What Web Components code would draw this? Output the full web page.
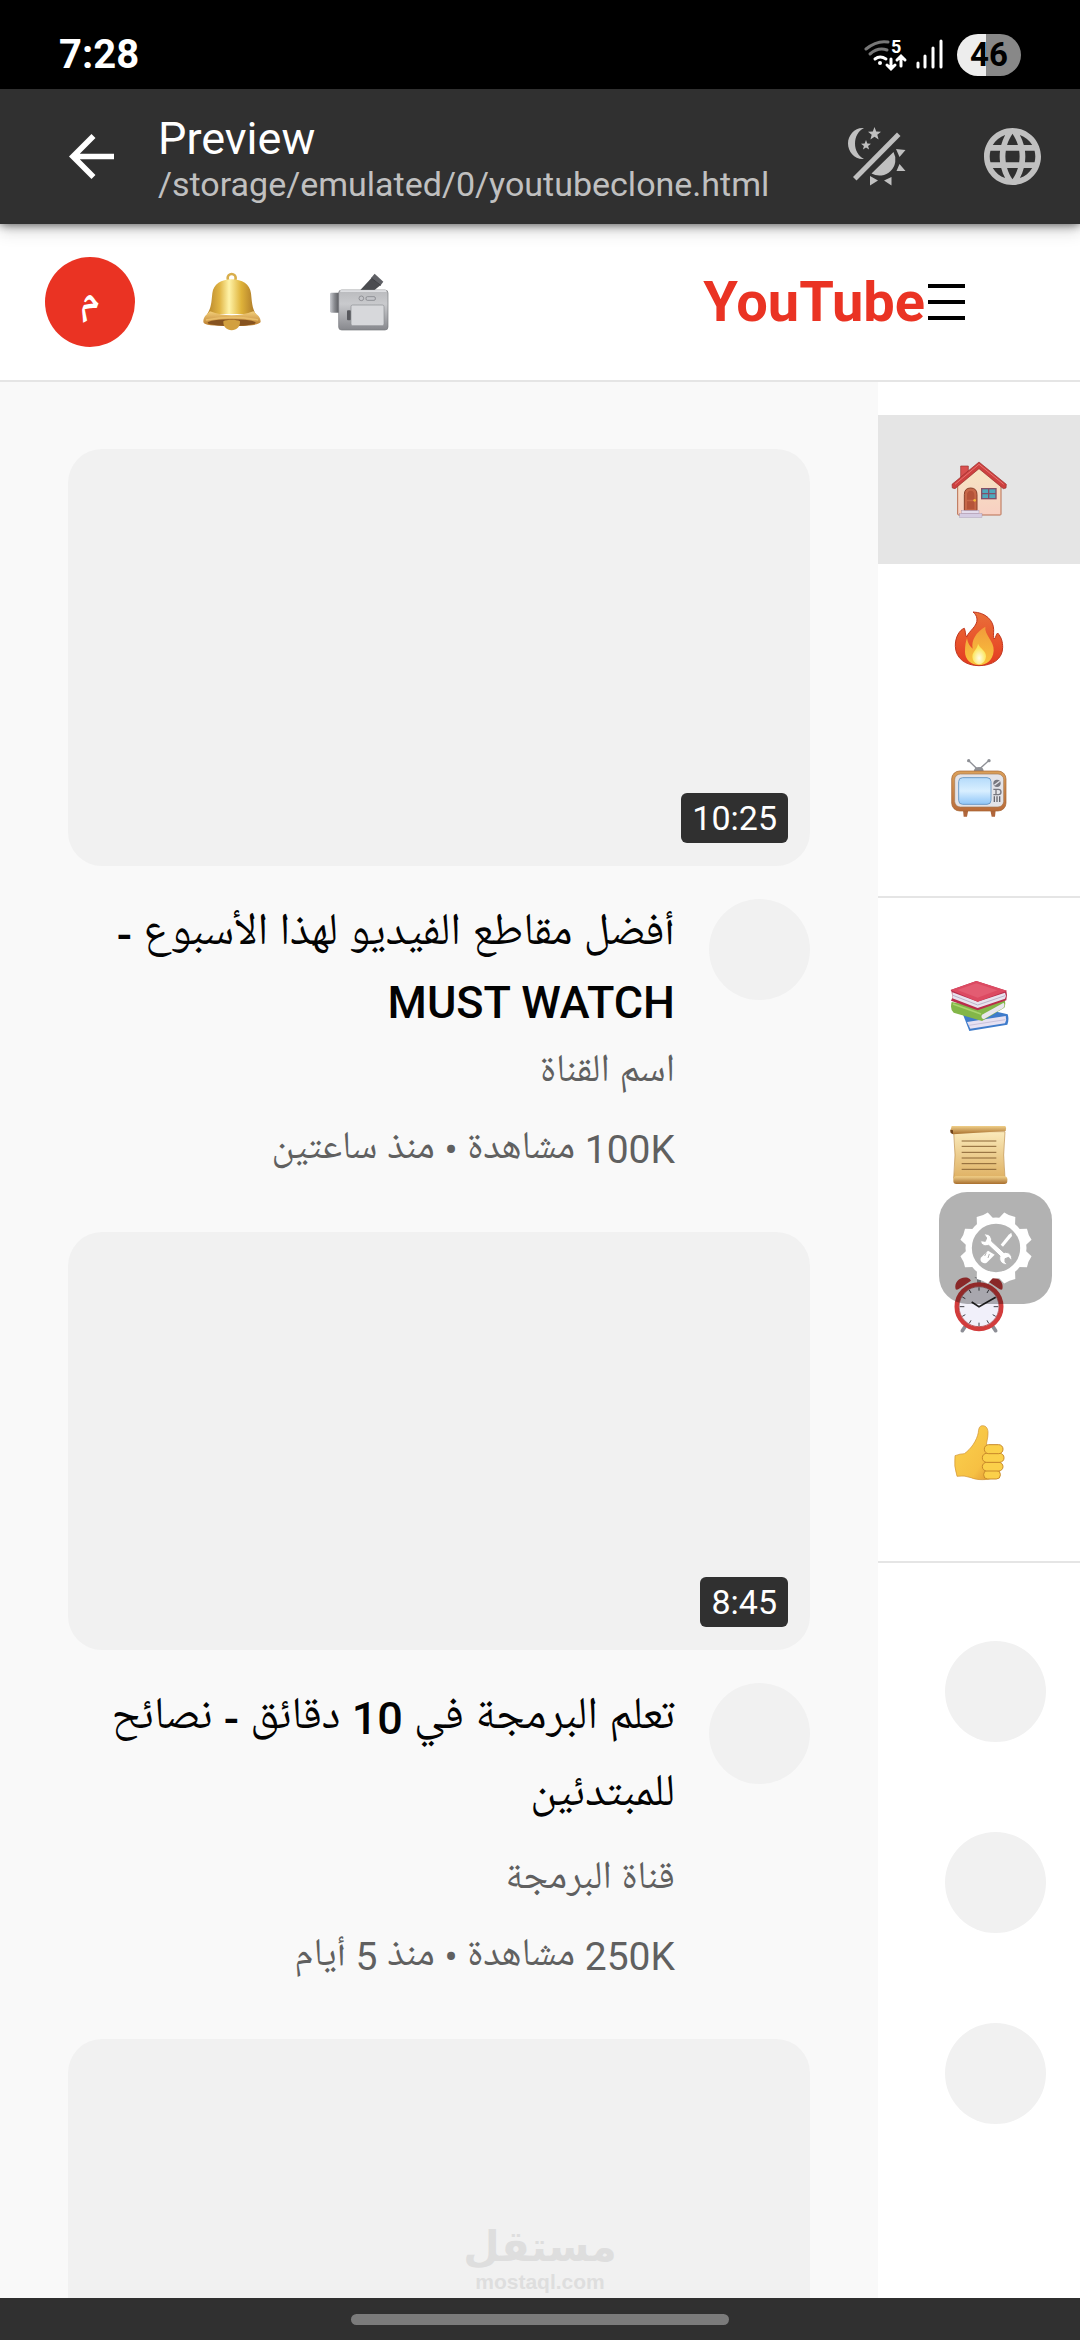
<!DOCTYPE html>
<html lang="ar" dir="rtl">
<head>
<meta charset="UTF-8">
<meta name="viewport" content="width=device-width, initial-scale=1.0">
<title>YouTube</title>
<style>
  body {
    margin: 0;
    height: 100vh;
    overflow: hidden;
    display: flex;
    flex-direction: column;
    background: #f9f9f9;
    font-family: Roboto, 'Noto Naskh Arabic UI', 'Noto Naskh Arabic', 'Noto Sans Arabic', 'DejaVu Sans', sans-serif;
  }
  .page {
    flex: 1;
    min-height: 0;
    display: flex;
    overflow: hidden;
  }
  main {
    flex: 1;
    min-width: 0;
    box-sizing: border-box;
    padding: 67px 68px 0;
    overflow: hidden;
  }
  video-card b { font-weight: 500; }
</style>
</head>
<body>
  <phone-status></phone-status>
  <preview-bar>
    <span slot="title">Preview</span>
    <span slot="path">/storage/emulated/0/youtubeclone.html</span>
  </preview-bar>
  <tube-header></tube-header>
  <div class="page">
    <side-nav></side-nav>
    <main>
      <video-card time="10:25">
        <span slot="title">أفضل مقاطع الفيديو لهذا الأسبوع <b>-</b></span>
        <span slot="latin">MUST WATCH</span>
        <span slot="channel">اسم القناة</span>
        <span slot="views">100K مشاهدة • منذ ساعتين</span>
      </video-card>
      <video-card time="8:45">
        <span slot="title">تعلم البرمجة في <b>10</b> دقائق <b>-</b> نصائح</span>
        <span slot="title">للمبتدئين</span>
        <span slot="channel">قناة البرمجة</span>
        <span slot="views">250K مشاهدة • منذ 5 أيام</span>
      </video-card>
      <video-card></video-card>
    </main>
  </div>
  <gesture-bar></gesture-bar>
  <tool-button></tool-button>
  <water-mark></water-mark>

<script>
// Emoji drawings, all on a 180x180 grid
const EMOJI = {
  bell: `
    <defs>
      <linearGradient id="g"><stop offset="0" stop-color="#b8862b"/><stop offset=".25" stop-color="#e0b443"/><stop offset=".45" stop-color="#fff3a8"/><stop offset=".7" stop-color="#dfb33a"/><stop offset="1" stop-color="#a97528"/></linearGradient>
      <linearGradient id="f" x2="0" y2="1"><stop offset="0" stop-color="#f3cf7a"/><stop offset="1" stop-color="#b8792b"/></linearGradient>
    </defs>
    <circle cx="89" cy="18" r="12" fill="none" stroke="#d8ae4c" stroke-width="8"/>
    <path d="M89 22C120 22 144 36 147 64C150 92 150 106 161 126L16 126C28 106 28 92 31 64C34 36 58 22 89 22Z" fill="url(#g)"/>
    <path d="M24 118C65 134 113 134 154 118C166 128 176 134 176 150C172 158 145 162 89 162S6 160 4 150C4 134 14 128 24 118Z" fill="url(#f)"/>
    <ellipse cx="89" cy="152" rx="72" ry="10" fill="#865320"/>
    <path d="M12 144Q89 128 168 144" fill="none" stroke="#e8bd6a" stroke-width="5"/>
    <path d="M64 148C75 142 103 142 114 148C115 164 104 175 89 175S63 164 64 148Z" fill="#d2a03f"/>`,
  camera: `
    <defs>
      <linearGradient id="g" x2="0" y2="1"><stop offset="0" stop-color="#b9babd"/><stop offset=".35" stop-color="#c9cacd"/><stop offset="1" stop-color="#87888d"/></linearGradient>
      <linearGradient id="l" x2="1" y2="0"><stop offset="0" stop-color="#c9cbd0"/><stop offset=".4" stop-color="#8b8d92"/><stop offset="1" stop-color="#47484c"/></linearGradient>
    </defs>
    <path d="M92 56L128 17L156 38L134 56Z" fill="#4b4c50"/>
    <path d="M126 18L137 5L163 29L154 41Z" fill="#5f6065"/>
    <path d="M128 19L155 40" stroke="#2f3033" stroke-width="2"/>
    <rect x="3" y="62" width="32" height="60" rx="4" fill="url(#l)"/>
    <rect x="29" y="54" width="148" height="120" rx="9" fill="url(#g)" stroke="#77787d" stroke-width="2"/>
    <path d="M34 57H172" stroke="#e9eaec" stroke-width="4"/>
    <rect x="54" y="115" width="12" height="30" rx="3" fill="#57585d"/>
    <rect x="66" y="99" width="99" height="62" rx="5" fill="#d7d8db" stroke="#8d8e93" stroke-width="2"/>
    <circle cx="97" cy="79" r="7" fill="#c4c5c9" stroke="#77787d" stroke-width="2"/>
    <rect x="111" y="74" width="28" height="11" rx="4" fill="#c4c5c9" stroke="#77787d" stroke-width="2"/>`,
  house: `
    <defs><linearGradient id="g" x2="0" y2="1"><stop offset="0" stop-color="#f6e6c2"/><stop offset="1" stop-color="#f8cfc2"/></linearGradient></defs>
    <path d="M35 18H58V48L35 66Z" fill="#d9504f" stroke="#9d3331" stroke-width="2"/>
    <path d="M26 70L90 18L156 70V163Q156 165 153 165H29Q26 165 26 162Z" fill="url(#g)" stroke="#b96e50" stroke-width="3"/>
    <path d="M90 6L172 73L171 84L163 86L90 26L18 86L10 84L9 73Z" fill="#cd403f" stroke="#97302d" stroke-width="2"/>
    <path d="M18 73L90 13L164 73" fill="none" stroke="#e97471" stroke-width="3"/>
    <path d="M46 152V104Q46 84 65 84T84 104V152Z" fill="#c76748" stroke="#8b4029" stroke-width="3"/>
    <path d="M54 119V106Q54 92 65 92T76 106V119ZM54 124H76V148H54Z" fill="#b55339"/>
    <circle cx="77" cy="121" r="4" fill="#f2b53c"/>
    <rect x="98" y="86" width="43" height="30" fill="#4fa8bd" stroke="#815068" stroke-width="4"/>
    <path d="M119 86V116M98 101H141" stroke="#815068" stroke-width="4"/>
    <rect x="38" y="151" width="52" height="9" fill="#e3dcec" stroke="#9184a6" stroke-width="1"/>
    <rect x="32" y="161" width="67" height="11" fill="#d5cce2" stroke="#9184a6" stroke-width="1"/>`,
  fire: `
    <defs>
      <linearGradient id="g" x2="0" y2="1"><stop offset="0" stop-color="#e9703a"/><stop offset=".6" stop-color="#e8502a"/><stop offset="1" stop-color="#e23a20"/></linearGradient>
      <linearGradient id="y" x2="0" y2="1"><stop offset="0" stop-color="#f19a3a"/><stop offset="1" stop-color="#f9c53d"/></linearGradient>
      <radialGradient id="c" cy=".7"><stop offset="0" stop-color="#fffde8"/><stop offset="1" stop-color="#fbe65c"/></radialGradient>
    </defs>
    <path d="M72 9C110 10 134 35 134 62C134 75 132 85 136 90C142 85 140 76 146 72C158 85 161 100 161 115C161 150 130 170 90 170C50 170 20 148 19 112C18 85 32 62 46 58C50 66 48 78 53 84C60 65 86 52 84 30C83 20 78 14 72 9Z" fill="url(#g)" stroke="#c1361f" stroke-width="3"/>
    <path d="M109 53C105 78 136 95 134 125C132 155 110 168 90 168C65 168 48 150 48 128C48 110 50 98 54 88C56 102 63 113 71 119C66 95 80 70 109 53Z" fill="url(#y)"/>
    <path d="M87 104C92 118 112 125 111 142C110 158 100 166 90 166C78 166 70 155 70 142C70 128 86 120 87 104Z" fill="url(#c)"/>`,
  tv: `
    <defs>
      <linearGradient id="g" x2="0" y2="1"><stop offset="0" stop-color="#dba05a"/><stop offset="1" stop-color="#b96b3a"/></linearGradient>
      <linearGradient id="s" x2="0" y2="1"><stop offset="0" stop-color="#b5dbfb"/><stop offset=".5" stop-color="#d9efff"/><stop offset="1" stop-color="#8fc6f8"/></linearGradient>
    </defs>
    <path d="M60 9L88 36L118 9" fill="none" stroke="#8e9096" stroke-width="4"/>
    <circle cx="59" cy="8" r="5" fill="#8e9096"/><circle cx="120" cy="8" r="5" fill="#8e9096"/>
    <path d="M74 40Q76 27 90 27T104 40Z" fill="#8e9096"/>
    <path d="M42 156H58L54 176H44ZM124 156H140L138 176H128Z" fill="#b0663b"/>
    <rect x="8" y="39" width="163" height="120" rx="24" fill="url(#g)" stroke="#a3622f" stroke-width="2"/>
    <rect x="17" y="48" width="147" height="99" rx="17" fill="#e3e3e8" stroke="#a57a54" stroke-width="2"/>
    <rect x="29" y="59" width="97" height="80" rx="12" fill="url(#s)" stroke="#6e9cc8" stroke-width="3"/>
    <circle cx="144" cy="76" r="11" fill="#77777f"/><path d="M136 82L152 70" stroke="#e3e3e8" stroke-width="4"/>
    <path d="M133 94H148Q156 94 156 102T148 110H133M141 94V110" fill="none" stroke="#77777f" stroke-width="4"/>
    <path d="M136 115V132M144 115V132M152 115V132" stroke="#66666e" stroke-width="4"/>`,
  books: `
    <path d="M41 113L110 100L176 115Q181 130 175 146L61 165Z" fill="#3f7ccb"/>
    <path d="M54 138L170 120Q174 132 168 142L64 158Z" fill="#e6e1f2"/>
    <path d="M60 148L169 131" stroke="#b9b2cf" stroke-width="2"/>
    <path d="M8 78L86 92L167 72Q171 84 166 95L99 135L14 110Q2 100 8 78Z" fill="#83b648"/>
    <path d="M99 116L164 80Q169 88 163 96L104 130Q94 126 99 116Z" fill="#e9e6ee"/>
    <path d="M12 84L96 114" stroke="#a9d56d" stroke-width="5"/>
    <path d="M5 42L82 15L172 44Q176 56 172 73L86 103L6 74L10 65L8 48Z" fill="#b92d4c"/>
    <path d="M10 49L86 77L168 50Q173 58 168 68L86 96L10 67Z" fill="#e8e2ee"/>
    <path d="M12 58L86 87L168 59" fill="none" stroke="#bcb4ca" stroke-width="3"/>
    <path d="M5 42L82 15L174 44L86 77Z" fill="#dc4a62"/>
    <path d="M25 42L82 22L145 43L86 65Z" fill="#e35c72"/>`,
  scroll: `
    <defs>
      <linearGradient id="g" x2="0" y2="1"><stop offset="0" stop-color="#faeabb"/><stop offset="1" stop-color="#dfb163"/></linearGradient>
      <linearGradient id="r" x2="0" y2="1"><stop offset="0" stop-color="#f0cf89"/><stop offset="1" stop-color="#a86f2e"/></linearGradient>
    </defs>
    <path d="M14 20H168Q160 90 168 160H14Q22 90 14 20Z" fill="url(#g)" stroke="#bd8b43" stroke-width="2"/>
    <path d="M8 3H169Q174 9 170 18L12 28Q5 26 4 18Z" fill="url(#r)"/>
    <path d="M4 14L12 16L12 27L5 24Z" fill="#70441b"/>
    <rect x="13" y="154" width="162" height="23" rx="9" fill="url(#r)"/>
    <path d="M38 48H142M38 64H142M38 82H142M38 99H142M38 116H142M38 133H142" stroke="#8a6435" stroke-width="3"/>`,
  clock: `
    <path d="M48 158L40 170M132 158L140 170" stroke="#8c8d95" stroke-width="11" stroke-linecap="round"/>
    <path d="M76 10H104L96 16V28H84V16Z" fill="#94969c"/>
    <path d="M20 46C14 24 34 6 56 11Q64 14 66 20L28 46Q23 48 20 46ZM160 46C166 24 146 6 124 11Q116 14 114 20L152 46Q157 48 160 46Z" fill="#c43a3a"/>
    <circle cx="90" cy="98" r="67" fill="#f1f0fa" stroke="#d23c3c" stroke-width="13"/>
    <circle cx="90" cy="98" r="60" fill="none" stroke="#a52c2e" stroke-width="2"/>
    <path d="M90 40V50M90 146V156M32 98H46M134 98H148M61 48L66 57M119 48L114 57M61 148L66 139M119 148L114 139M40 69L49 74M40 127L49 122M140 127L131 122" stroke="#3f3f46" stroke-width="3"/>
    <path d="M68 84L90 98L140 70" fill="none" stroke="#222" stroke-width="5"/>`,
  thumb: `
    <defs><linearGradient id="g" y2="1"><stop offset="0" stop-color="#fbd24e"/><stop offset=".7" stop-color="#f6c043"/><stop offset="1" stop-color="#de9432"/></linearGradient></defs>
    <path d="M18 98Q34 92 46 92C66 78 84 52 88 28C89 12 94 8 101 8C112 8 118 18 117 32C117 46 112 58 112 68H132V164C116 172 84 172 66 164Q46 156 24 160Q14 130 18 98Z" fill="url(#g)" stroke="#cf9132" stroke-width="2"/>
    <g fill="#fbd04a" stroke="#c98a2b" stroke-width="3">
      <rect x="104" y="142" width="50" height="26" rx="12"/>
      <rect x="100" y="118" width="62" height="26" rx="13"/>
      <rect x="100" y="91" width="65" height="27" rx="13"/>
      <rect x="106" y="65" width="56" height="27" rx="13"/>
    </g>`
};

class EmojiIcon extends HTMLElement {
  connectedCallback() {
    this.attachShadow({ mode: 'open' });
    this.shadowRoot.innerHTML = `
      <style>
        :host { display: block; width: 60px; height: 60px; }
        svg { display: block; width: 100%; height: 100%; }
      </style>
      <svg viewBox="0 0 180 180" aria-hidden="true">${EMOJI[this.getAttribute('name')]}</svg>
    `;
  }
}

class PhoneStatus extends HTMLElement {
  connectedCallback() {
    this.attachShadow({ mode: 'open' });
    this.shadowRoot.innerHTML = `
      <style>
        :host {
          display: flex;
          direction: ltr;
          justify-content: space-between;
          align-items: center;
          height: 89px;
          box-sizing: border-box;
          padding: 21px 59px 0;
          background: #000;
          color: #fff;
        }
        .clock { font-size: 40px; font-weight: 700; line-height: 48px; }
        .right { display: flex; align-items: center; gap: 14px; }
        svg { display: block; }
        .battery {
          width: 64px;
          height: 42px;
          line-height: 42px;
          border-radius: 21px;
          text-align: center;
          font-size: 33px;
          font-weight: 700;
          color: #000;
          background: linear-gradient(90deg, #ededed 46%, #888 46%);
        }
      </style>
      <span class="clock">7:28</span>
      <div class="right">
        <svg width="79" height="44" viewBox="864 34 79 44" fill="none" stroke="#fff" stroke-linecap="round">
          <path d="M866 50Q877 41 888 43" stroke="#777" stroke-width="3"/>
          <path d="M870 55Q878 48 887 51" stroke="#777" stroke-width="3"/>
          <path d="M875 60Q880 56 886 60" stroke-width="3"/>
          <circle cx="880" cy="64" r="2" fill="#fff" stroke="none"/>
          <path d="M891 60V69M887 66L891 70L895 66M901 67V58M897 61L901 57L905 61" stroke-width="3"/>
          <text x="891" y="54" font-size="18" font-weight="700" fill="#fff" stroke="none">5</text>
          <path d="M918 64V68M925 57V68M933 49V68M941 42V68" stroke-width="3"/>
        </svg>
        <span class="battery">46</span>
      </div>
    `;
  }
}

class PreviewBar extends HTMLElement {
  connectedCallback() {
    this.attachShadow({ mode: 'open' });
    this.shadowRoot.innerHTML = `
      <style>
        :host {
          display: flex;
          direction: ltr;
          align-items: center;
          position: relative;
          z-index: 2;
          height: 135px;
          box-sizing: border-box;
          padding: 0 39px 0 69px;
          background: #303030;
          box-shadow: 0 0 10px rgba(0, 0, 0, 0.7), 0 8px 16px rgba(0, 0, 0, 0.12);
          color: #c0c0c0;
        }
        button { border: 0; padding: 0; background: none; color: inherit; }
        svg { display: block; fill: currentColor; }
        .back { color: #fff; }
        .text { flex: 1; padding: 5px 0 0 44px; }
        .title { color: #fff; font-size: 45px; line-height: 50px; }
        .path { font-size: 34px; line-height: 40px; }
        .actions { display: flex; gap: 78px; }
      </style>
      <button class="back" aria-label="Back">
        <svg width="45" height="45" viewBox="4 4 16 16"><path d="M20 11H7.83l5.59-5.59L12 4l-8 8 8 8 1.41-1.41L7.83 13H20v-2z"/></svg>
      </button>
      <div class="text">
        <div class="title"><slot name="title"></slot></div>
        <div class="path"><slot name="path"></slot></div>
      </div>
      <div class="actions">
        <button aria-label="Theme">
          <svg width="59" height="59" viewBox="0 0 59 59">
            <path d="M17 1C8 0 1 8 1 16.500S8 33 17 32C11 29 8 23 8 16.500S11 4 17 1Z"/>
            <path d="M27.500 0L29.200 4.600L34 4.800L30.300 7.800L31.600 12.500L27.500 9.800L23.400 12.500L24.700 7.800L21 4.800L25.800 4.600Z"/>
            <path d="M19 13L20.300 16.500L24 16.700L21.100 19L22.100 22.600L19 20.500L15.900 22.600L16.900 19L14 16.700L17.700 16.500Z"/>
            <path d="M50 5.500L53.500 9L9.500 53.500L6 50Z"/>
            <path d="M46.500 25A16 16 0 0 1 24.500 46.500Z"/>
            <path d="M49 22L58.500 23L52.500 30ZM52.500 37L58.500 44L49.500 44ZM44.500 50V58.500L37 53.500ZM23 49L31 53.500L23 58.500Z"/>
          </svg>
        </button>
        <button aria-label="Language">
          <svg width="57" height="57" viewBox="2 2 20 20"><path d="M11.99 2C6.47 2 2 6.48 2 12s4.47 10 9.99 10C17.52 22 22 17.52 22 12S17.520 2 11.990 2zm6.930 6h-2.950c-.32-1.250-.78-2.450-1.380-3.560 1.840.63 3.370 1.910 4.330 3.560zM12 4.040c.83 1.200 1.480 2.530 1.910 3.960h-3.820c.43-1.430 1.080-2.760 1.910-3.960zM4.260 14C4.100 13.360 4 12.690 4 12s.1-1.360.26-2h3.380c-.08.66-.14 1.320-.14 2s.06 1.340.14 2H4.260zm.82 2h2.950c.32 1.250.78 2.450 1.380 3.560-1.840-.63-3.370-1.900-4.330-3.560zm2.950-8H5.080c.96-1.660 2.490-2.930 4.330-3.560C8.810 5.550 8.350 6.750 8.030 8zM12 19.960c-.83-1.200-1.480-2.530-1.910-3.960h3.820c-.43 1.430-1.080 2.760-1.910 3.960zM14.340 14H9.660c-.09-.66-.16-1.320-.16-2s.07-1.350.16-2h4.680c.09.65.16 1.320.16 2s-.07 1.340-.16 2zm.25 5.560c.6-1.110 1.060-2.310 1.380-3.560h2.950c-.96 1.650-2.490 2.930-4.330 3.560zM16.360 14c.08-.66.14-1.320.14-2s-.06-1.340-.14-2h3.380c.16.64.26 1.310.26 2s-.1 1.360-.26 2h-3.380z"/></svg>
        </button>
      </div>
    `;
  }
}

class TubeHeader extends HTMLElement {
  connectedCallback() {
    this.attachShadow({ mode: 'open' });
    this.shadowRoot.innerHTML = `
      <style>
        :host {
          display: flex;
          justify-content: space-between;
          align-items: center;
          height: 158px;
          box-sizing: border-box;
          padding: 0 115px 0 45px;
          background: #fff;
          border-bottom: 2px solid #e5e5e5;
        }
        .start { display: flex; align-items: center; gap: 3px; }
        .end { display: flex; align-items: center; gap: 67px; }
        button { border: 0; padding: 0; background: none; color: #000; }
        svg { display: block; }
        .logo {
          color: #ea3323;
          font-size: 56px;
          line-height: 64px;
          font-weight: 700;
          text-decoration: none;
        }
        .avatar {
          width: 90px;
          height: 90px;
          border-radius: 50%;
          background: #ea3323;
          color: #fff;
          font-size: 39px;
          line-height: 90px;
          text-align: center;
          font-weight: 700;
        }
      </style>
      <div class="start">
        <button aria-label="القائمة">
          <svg width="37" height="38" viewBox="0 0 37 38" fill="none" stroke="#000" stroke-width="4"><path d="M0 3H37M0 19H37M0 35H37"/></svg>
        </button>
        <a class="logo" href="#">YouTube</a>
      </div>
      <div class="end">
        <button aria-label="إنشاء"><emoji-icon name="camera"></emoji-icon></button>
        <button aria-label="الإشعارات"><emoji-icon name="bell"></emoji-icon></button>
        <div class="avatar">م</div>
      </div>
    `;
  }
}

class SideNav extends HTMLElement {
  connectedCallback() {
    const item = ([name, label], active) => `
      <a href="#" class="${active ? 'active' : ''}" aria-label="${label}"><emoji-icon name="${name}"></emoji-icon></a>`;
    const top = [['house', 'الرئيسية'], ['fire', 'الشائع'], ['tv', 'الاشتراكات']];
    const mine = [['books', 'المكتبة'], ['scroll', 'السجل'], ['clock', 'المشاهدة لاحقًا'], ['thumb', 'أعجبني']];
    this.attachShadow({ mode: 'open' });
    this.shadowRoot.innerHTML = `
      <style>
        :host {
          display: block;
          width: 202px;
          box-sizing: border-box;
          padding-top: 33px;
          background: #fff;
        }
        section {
          padding-bottom: 34px;
          margin-bottom: 33px;
          border-bottom: 2px solid #e5e5e5;
        }
        section:last-of-type { border: 0; }
        a {
          display: flex;
          justify-content: center;
          align-items: center;
          height: 149px;
        }
        a.active { background: #e5e5e5; }
        .channel { justify-content: flex-start; height: 191px; padding: 0 34px; }
        .channel i { width: 101px; height: 101px; border-radius: 50%; background: #f1f1f1; }
      </style>
      <section>${top.map((t, i) => item(t, i === 0)).join('')}</section>
      <section>${mine.map(t => item(t)).join('')}</section>
      <section>${'<a href="#" class="channel" aria-label="قناة"><i></i></a>'.repeat(3)}</section>
    `;
  }
}

class VideoCard extends HTMLElement {
  connectedCallback() {
    const time = this.getAttribute('time');
    this.attachShadow({ mode: 'open' });
    this.shadowRoot.innerHTML = `
      <style>
        :host { display: block; margin-bottom: 45px; }
        .thumb {
          position: relative;
          aspect-ratio: 16 / 9;
          border-radius: 34px;
          background: #f1f1f1;
        }
        .time {
          position: absolute;
          right: 22px;
          bottom: 23px;
          padding: 0 11px;
          border-radius: 6px;
          background: #303030;
          color: #fff;
          font-size: 34px;
          line-height: 50px;
        }
        .info { display: flex; gap: 34px; padding-top: 33px; }
        .avatar { flex: none; width: 101px; height: 101px; border-radius: 50%; background: #f1f1f1; }
        h3 { margin: 0; font-size: 45px; font-weight: 400; color: #030303; }
        ::slotted(*) { display: block; white-space: nowrap; }
        ::slotted([slot="title"]) { line-height: 71px; padding-bottom: 6px; }
        ::slotted([slot="latin"]) { line-height: 54px; font-weight: 500; }
        .meta { font-size: 39px; line-height: 58px; color: #606060; }
        ::slotted([slot="channel"]) { padding-top: 14px; padding-bottom: 6px; }
        ::slotted([slot="views"]) { padding-top: 13px; padding-bottom: 8px; }
      </style>
      <div class="thumb">${time ? `<span class="time">${time}</span>` : ''}</div>
      <div class="info">
        <div class="avatar"></div>
        <div class="text">
          <h3><slot name="title"></slot><slot name="latin"></slot></h3>
          <div class="meta"><slot name="channel"></slot><slot name="views"></slot></div>
        </div>
      </div>
    `;
  }
}

class ToolButton extends HTMLElement {
  connectedCallback() {
    const teeth = [0, 1, 2, 3, 4, 5, 6, 7]
      .map(i => `<path d="M-27 -84L-18 -108Q0 -104 18 -108L27 -84Z" transform="rotate(${22.5 + i * 45})"/>`).join('');
    this.attachShadow({ mode: 'open' });
    this.shadowRoot.innerHTML = `
      <style>
        :host { position: absolute; z-index: 3; top: 1192px; right: 28px; }
        button {
          display: flex;
          justify-content: center;
          align-items: center;
          width: 113px;
          height: 112px;
          border: 0;
          padding: 0;
          border-radius: 28px;
          background: rgba(0, 0, 0, 0.3);
        }
      </style>
      <button aria-label="Tools">
        <svg width="72" height="72" viewBox="-108 -108 216 216" fill="#fff">
          <circle r="82" fill="none" stroke="#fff" stroke-width="19"/>
          ${teeth}
          <path d="M46 -46L38 -40L14 -10L21 -4L48 -36Z"/>
          <path d="M-24 8L-44 28C-52 38 -40 50 -28 44L-4 20Z"/>
          <path d="M-29 14L-34 24M-20 18L-24 30" stroke="#b3b3b3" stroke-width="3"/>
          <path d="M-46 -22L-32 -20L-28 -30L-36 -42C-22 -44 -12 -34 -13 -20L24 14C36 10 50 20 47 38L38 28L27 32L27 42L34 50C16 50 8 38 12 24L-22 -8C-34 -4 -46 -10 -46 -22Z" stroke="#b3b3b3" stroke-width="3"/>
        </svg>
      </button>
    `;
  }
}

class WaterMark extends HTMLElement {
  connectedCallback() {
    this.attachShadow({ mode: 'open' });
    this.shadowRoot.innerHTML = `
      <style>
        :host {
          position: absolute;
          left: 0;
          right: 0;
          bottom: 46px;
          text-align: center;
          color: #dedede;
          font-weight: 700;
          pointer-events: none;
        }
        div { font: 700 42px/46px 'DejaVu Sans', sans-serif; }
        small { display: block; font: 700 21px/24px 'Liberation Sans', sans-serif; }
      </style>
      <div>مستقل</div>
      <small>mostaql.com</small>
    `;
  }
}

class GestureBar extends HTMLElement {
  connectedCallback() {
    this.attachShadow({ mode: 'open' });
    this.shadowRoot.innerHTML = `
      <style>
        :host {
          display: flex;
          justify-content: center;
          align-items: center;
          height: 42px;
          background: #303030;
        }
        span { width: 35%; height: 11px; border-radius: 6px; background: #7b7b7b; }
      </style>
      <span></span>
    `;
  }
}

customElements.define('emoji-icon', EmojiIcon);
customElements.define('phone-status', PhoneStatus);
customElements.define('preview-bar', PreviewBar);
customElements.define('tube-header', TubeHeader);
customElements.define('side-nav', SideNav);
customElements.define('video-card', VideoCard);
customElements.define('tool-button', ToolButton);
customElements.define('water-mark', WaterMark);
customElements.define('gesture-bar', GestureBar);
</script>
</body>
</html>
